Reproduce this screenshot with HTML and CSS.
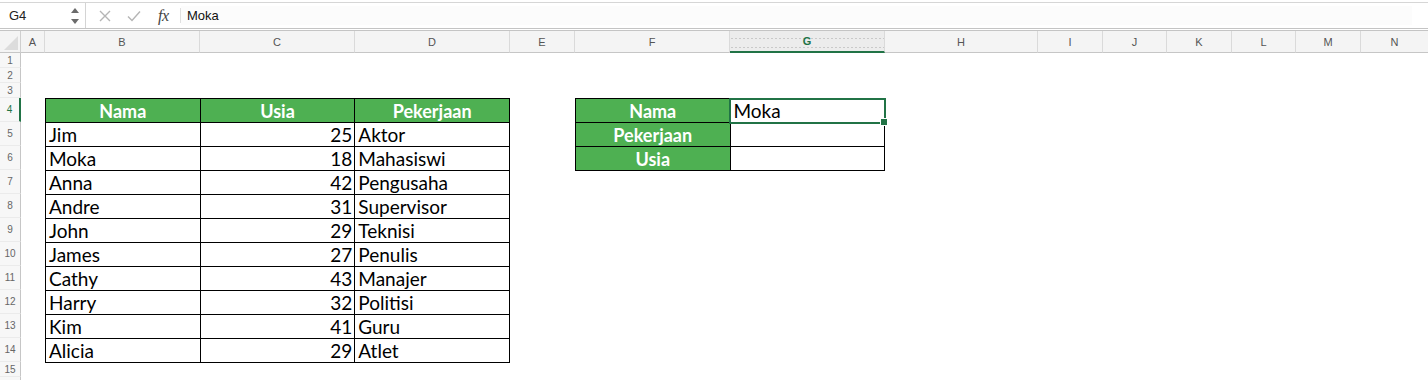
FILE: index.html
```html
<!DOCTYPE html>
<html lang="id">
<head>
<meta charset="utf-8">
<title>Excel - Moka</title>
<link rel="stylesheet" href="styles.css">
</head>
<body>
<div class="formula-bar">
  <div class="name-box">
    <span class="name-text">G4</span>
    <svg class="spinner" width="10" height="18" viewBox="0 0 10 18"><path d="M1 6 L5 1 L9 6 Z" fill="#6b6b6b"/><path d="M1 12 L5 17 L9 12 Z" fill="#6b6b6b"/></svg>
  </div>
  <div class="fb-icons">
    <svg class="fb-x" width="12" height="12" viewBox="0 0 12 12"><path d="M1 1 L11 11 M11 1 L1 11" stroke="#b5b5b5" stroke-width="1.4" fill="none"/></svg>
    <svg class="fb-check" width="14" height="12" viewBox="0 0 14 12"><path d="M1 6.5 L5 10.5 L13 1.5" stroke="#b5b5b5" stroke-width="1.4" fill="none"/></svg>
    <span class="fb-fx">fx</span>
  </div>
  <div class="fb-input">Moka</div>
</div>

<div class="sheet">
  <div class="corner"><svg width="14" height="14" viewBox="0 0 14 14"><path d="M14 0 L14 14 L0 14 Z" fill="#dcdcdc"/></svg></div>
  <div class="ch">A</div>
  <div class="ch">B</div>
  <div class="ch">C</div>
  <div class="ch">D</div>
  <div class="ch">E</div>
  <div class="ch">F</div>
  <div class="ch ch-active">G</div>
  <div class="ch">H</div>
  <div class="ch">I</div>
  <div class="ch">J</div>
  <div class="ch">K</div>
  <div class="ch">L</div>
  <div class="ch">M</div>
  <div class="ch ch-last">N</div>

  <div class="rh r1">1</div>
  <div class="rh r2">2</div>
  <div class="rh r3">3</div>
  <div class="rh r4 rh-active">4</div>
  <div class="rh r5">5</div>
  <div class="rh r6">6</div>
  <div class="rh r7">7</div>
  <div class="rh r8">8</div>
  <div class="rh r9">9</div>
  <div class="rh r10">10</div>
  <div class="rh r11">11</div>
  <div class="rh r12">12</div>
  <div class="rh r13">13</div>
  <div class="rh r14">14</div>
  <div class="rh r15">15</div>
  <div class="rh r16"></div>

  <table class="data data-main">
    <thead>
      <tr><th>Nama</th><th>Usia</th><th>Pekerjaan</th></tr>
    </thead>
    <tbody>
      <tr><td>Jim</td><td class="num">25</td><td>Aktor</td></tr>
      <tr><td>Moka</td><td class="num">18</td><td>Mahasiswi</td></tr>
      <tr><td>Anna</td><td class="num">42</td><td>Pengusaha</td></tr>
      <tr><td>Andre</td><td class="num">31</td><td>Supervisor</td></tr>
      <tr><td>John</td><td class="num">29</td><td>Teknisi</td></tr>
      <tr><td>James</td><td class="num">27</td><td>Penulis</td></tr>
      <tr><td>Cathy</td><td class="num">43</td><td>Manajer</td></tr>
      <tr><td>Harry</td><td class="num">32</td><td>Politisi</td></tr>
      <tr><td>Kim</td><td class="num">41</td><td>Guru</td></tr>
      <tr><td>Alicia</td><td class="num">29</td><td>Atlet</td></tr>
    </tbody>
  </table>

  <table class="data data-lookup">
    <tbody>
      <tr><th>Nama</th><td class="selected">Moka</td></tr>
      <tr><th>Pekerjaan</th><td></td></tr>
      <tr><th>Usia</th><td></td></tr>
    </tbody>
  </table>
</div>
</body>
</html>
```

FILE: styles.css
```css
* { box-sizing: border-box; }

html, body {
  margin: 0;
  padding: 0;
  background: #ffffff;
  width: 1428px;
  height: 380px;
  overflow: hidden;
  font-family: "Liberation Sans", Arial, sans-serif;
}

/* ---------- formula bar ---------- */
.formula-bar {
  margin-top: 2px;
  height: 29px;
  border-top: 1px solid #d6d6d6;
  border-bottom: 3px double #c4c4c4;
  display: flex;
  align-items: stretch;
  background: #ffffff;
}

.name-box {
  width: 86px;
  border-right: 1px solid #d4d4d4;
  display: flex;
  align-items: center;
  justify-content: space-between;
  padding: 0 5px 0 9px;
}

.name-text {
  font-size: 13px;
  color: #222;
}

.spinner { display: block; }

.fb-icons {
  display: flex;
  align-items: center;
  padding-left: 13px;
  width: 95px;
  border-right: 1px solid #e0e0e0;
  margin: 5px 0;
}

.fb-x { margin-right: 16px; }
.fb-check { margin-right: 17px; }

.fb-fx {
  font-family: "Liberation Serif", "Times New Roman", serif;
  font-style: italic;
  font-size: 16px;
  color: #444;
  letter-spacing: -0.5px;
}

.fb-input {
  flex: 1;
  display: flex;
  align-items: center;
  padding-left: 6px;
  font-size: 13px;
  color: #111;
  background: #fcfcfc;
  margin: 3px 16px 3px 0;
}

/* ---------- sheet grid ---------- */
.sheet {
  display: grid;
  grid-template-columns: 21px 24px 155px 155px 155px 65px 155px 155px 153px 65px 64px 65px 64px 65px 67px;
  grid-template-rows: 22px 15px 15px 15px repeat(11, 24px) 15px 3px;
}

.corner {
  grid-row: 1;
  grid-column: 1;
  background: #f4f4f4;
  border-right: 1px solid #cfcfcf;
  border-bottom: 1px solid #c6c6c6;
  display: flex;
  align-items: flex-end;
  justify-content: flex-end;
  padding: 0 2px 2px 0;
}

.corner svg { display: block; }

.ch {
  grid-row: 1;
  background: #f4f4f4;
  border-right: 1px solid #dadada;
  border-bottom: 1px solid #c6c6c6;
  font-size: 11px;
  color: #555;
  display: flex;
  align-items: center;
  justify-content: center;
}

.ch-last { border-right: none; }

.ch-active {
  background-color: #ececec;
  background-image: radial-gradient(circle, #c9c9c9 0.6px, transparent 0.8px);
  background-size: 4px 9px;
  background-position: 0 3px;
  color: #217346;
  font-weight: bold;
  border-bottom: 2px solid #217346;
}

.rh {
  grid-column: 1;
  background: #f7f7f7;
  border-right: 1px solid #c6c6c6;
  border-bottom: 1px solid #ebebeb;
  font-size: 10px;
  color: #666;
  display: flex;
  align-items: center;
  justify-content: center;
}

.rh-active {
  border-right: 2px solid #217346;
  color: #217346;
}

.r1 { grid-row: 2; }
.r2 { grid-row: 3; }
.r3 { grid-row: 4; }
.r4 { grid-row: 5; }
.r5 { grid-row: 6; }
.r6 { grid-row: 7; }
.r7 { grid-row: 8; }
.r8 { grid-row: 9; }
.r9 { grid-row: 10; }
.r10 { grid-row: 11; }
.r11 { grid-row: 12; }
.r12 { grid-row: 13; }
.r13 { grid-row: 14; }
.r14 { grid-row: 15; }
.r15 { grid-row: 16; }
.r16 { grid-row: 17; border-bottom: none; }

/* ---------- data tables ---------- */
.data {
  border-collapse: collapse;
  table-layout: fixed;
  width: 100%;
  height: 100%;
  font-family: Lato, "Open Sans", sans-serif;
  font-size: 19px;
  color: #000;
}

.data th,
.data td {
  border: 1px solid #000;
  height: 24px;
  padding: 0 3px;
  line-height: 22px;
  white-space: nowrap;
  overflow: visible;
}

.data th {
  background: #4eb052;
  color: #fff;
  font-size: 18px;
  font-weight: 700;
  text-align: center;
}

.data td { text-align: left; }
.data td.num { text-align: right; padding-right: 2px; }

.data-main {
  grid-column: 3 / 6;
  grid-row: 5 / 16;
}

.data-lookup {
  grid-column: 7 / 9;
  grid-row: 5 / 8;
}

.data td.selected {
  position: relative;
  outline: 2px solid #217346;
  outline-offset: -1px;
}

.data td.selected::after {
  content: "";
  position: absolute;
  right: -4px;
  bottom: -4px;
  width: 6px;
  height: 6px;
  background: #217346;
  border: 1px solid #fff;
}
```
